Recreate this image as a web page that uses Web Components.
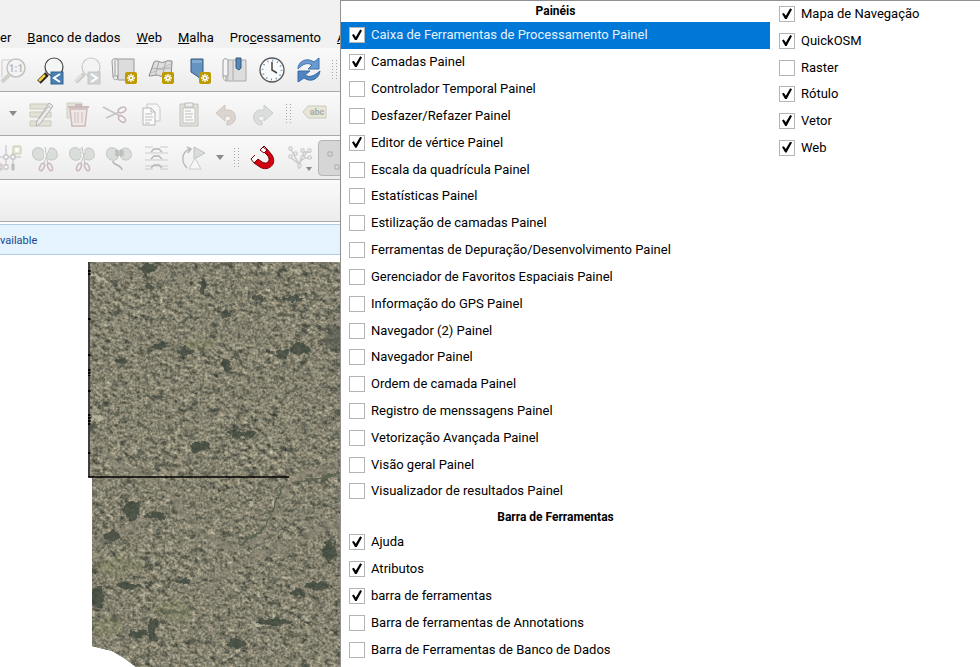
<!DOCTYPE html>
<html lang="pt">
<head>
<meta charset="utf-8">
<title>QGIS</title>
<style>
  body {
    margin: 0;
    font-family: Roboto, "Open Sans", sans-serif;
    font-size: 13px;
    color: #000;
  }
</style>
</head>
<body>
<gis-app></gis-app>

<script>
const badge = '<rect x="15" y="16" width="12" height="12" rx="2" fill="#bd9b05"/><path d="M21 18v8M17 22h8M18.300 19.300l5.400 5.400M23.700 19.300l-5.400 5.400" stroke="#fff" stroke-width="1.400"/><circle cx="21" cy="22" r="2" fill="#fff"/><circle cx="21" cy="22" r="1" fill="#bd9b05"/>';

const leaves = '<path d="M13 13C12 18 3 17 2 12 0 5 5 3 9 4c3 1 5 4 4 9zM16 13c1 4 8 4 10 0 1-5-1-9-6-9-5 1-6 4-4 9z" fill="#d9deda" stroke="#c2c6c2"/>';
const scissors = '<path d="M14 3l1 13M18 4l-5 14" stroke="#f4f4f4" stroke-width="3"/><path d="M14 3l3 17M19 4l-6 15" stroke="#c4c4c4"/><ellipse cx="11" cy="23" rx="2" ry="4" transform="rotate(25 11 23)" fill="none" stroke="#c9b8bb" stroke-width="1.500"/><ellipse cx="19" cy="23" rx="2" ry="4" transform="rotate(-25 19 23)" fill="none" stroke="#c9b8bb" stroke-width="1.500"/>';

// every icon is drawn on a 28 x 28 grid
const icons = {
  'zoom-actual': '<path d="M3 21V4h15" fill="none" stroke="#ccc"/><path d="M10 19l-7 7" stroke="#d2d0c8" stroke-width="4"/><circle cx="17" cy="12" r="9" fill="#f3f3f3" stroke="#c2c2c2" stroke-width="1.500"/><text x="17" y="16" text-anchor="middle" font-size="10" font-weight="bold" fill="#bbb">1:1</text>',
  'zoom-last': '<path d="M11 18l-8 8" stroke="#222" stroke-width="5"/><path d="M9 19l-6 6" stroke="#f3d13a" stroke-width="2.500"/><circle cx="18" cy="11" r="9" fill="#f4f5f5" stroke="#444" stroke-width="1.200"/><rect x="15" y="16" width="12" height="12" fill="#4a7fb5" stroke="#35648f"/><path d="M24 18l-6 4 6 4" fill="none" stroke="#fff" stroke-width="2"/>',
  'zoom-next': '<path d="M11 18l-8 8" stroke="#c9c9c9" stroke-width="4"/><path d="M9 19l-6 6" stroke="#e6e3d6" stroke-width="2"/><circle cx="18" cy="11" r="9" fill="#f3f3f3" stroke="#c8c8c8" stroke-width="1.200"/><rect x="15" y="16" width="12" height="12" fill="#d0d3d5" stroke="#c2c5c8"/><path d="M18 18l6 4-6 4" fill="none" stroke="#fff" stroke-width="2"/>',
  'new-map': '<path d="M6 3h18v21H8z" fill="#dcdcdc" stroke="#999"/><path d="M2 5c0-3 6-3 6 0v15H3z" fill="#f2f2f2" stroke="#999"/><path d="M3 20c0 5 5 5 5 0M5 4v15" fill="none" stroke="#999"/>' + badge,
  'new-3d': '<path d="M7 6c4-3 6 2 10 0s6-1 8-1l-1 16c-5-2-7 1-11-1s-7 0-11 0z" fill="#dedede" stroke="#888"/><path d="M5 13c5-2 8 1 11 0s6-1 9-1M12 5l-4 15M19 5l-4 16" fill="none" stroke="#aaa"/><path d="M4 17l20-9" stroke="#bbb"/>' + badge,
  'new-bookmark': '<path d="M7 3h12v22l-6-5-6-4z" fill="#6593c2" stroke="#345879"/><path d="M8 4h10v3H8z" fill="#82aad1"/>' + badge,
  'bookmarks': '<path d="M5 4h20v21H5z" fill="#ddd" stroke="#aaa"/><path d="M2 5c0-3 5-3 5 0v15H2z" fill="#f5f5f5" stroke="#999"/><path d="M2 20c0 6 5 6 5 1M12 5v19" fill="none" stroke="#aaa"/><path d="M15 2h5v10l-2 2-3-2z" fill="#5787b9" stroke="#34587d"/>',
  'clock': '<circle cx="14" cy="14" r="12" fill="#f8fafb" stroke="#555" stroke-width="1.300"/><circle cx="14" cy="14" r="9.500" fill="none" stroke="#5b86b3" stroke-width="1.800" stroke-dasharray="1 3.970"/><path d="M14 6v8l5 3" fill="none" stroke="#444" stroke-width="1.500"/>',
  'refresh': '<path d="M3 13C3 5 12 1 19 6l5-4v11H13l4-4c-5-3-9-1-14 4z" fill="#6b9bd0" stroke="#3d71aa"/><path d="M25 15c-1 8-9 12-16 7l-6 4V15h12l-5 4c5 3 9 1 15-4z" fill="#4f85c1" stroke="#376ba4"/>',
  'edit-table': '<path d="M3 4h21v5H3zM3 12h21v5H3zM3 21h21v5H3z" fill="#e2e2d6" stroke="#c9c9bb"/><path d="M22 3l4 3-13 18-4 2 1-5z" fill="#ececec" stroke="#b3b3b3"/><path d="M21 6l3 2M12 19l9-12" stroke="#c3b5b5"/>',
  'trash': '<path d="M3 3h15v15H3z" fill="#e2e2d6" stroke="#cfcfc2"/><path d="M6 9h17l-2 17H8z" fill="#f0e8e8" stroke="#cdbaba" stroke-width="1.500"/><path d="M4 7h21M11 5h7" stroke="#cdbaba" stroke-width="2"/><path d="M11 12v11M14 12v11M18 12v11" stroke="#cdbaba"/>',
  'cut': '<path d="M2 7l17 9M5 18l18-8" stroke="#c4c4c4" stroke-width="1.500"/><ellipse cx="21" cy="10" rx="4" ry="2.500" transform="rotate(-25 21 10)" fill="#f4f4f4" stroke="#c9b8bb" stroke-width="1.500"/><ellipse cx="21" cy="19" rx="4" ry="2.500" transform="rotate(40 21 19)" fill="#f4f4f4" stroke="#c9b8bb" stroke-width="1.500"/>',
  'copy': '<path d="M9 4h10l3 4v13H9z" fill="#f7f7f7" stroke="#c8c8c8"/><path d="M5 8h8l4 4v13H5z" fill="#fbfbfb" stroke="#b5b5b5"/><path d="M13 8v4h4M7 14h7M7 17h8M7 20h7M7 23h5" fill="none" stroke="#bbb"/>',
  'paste': '<path d="M5 4h18v22H5z" fill="#e0e0d9" stroke="#c4c4bd"/><path d="M8 8h12v15H8z" fill="#fafafa" stroke="#c3c3c3"/><path d="M10 3h8v4h-8z" fill="#eee" stroke="#bbb"/><path d="M10 11h6M10 14h8M10 17h7M10 20h8" stroke="#bbb"/>',
  'undo': '<path d="M4 13l9-8v5h3c10 0 10 15-1 15v-4c5 0 5-5 1-5h-3v5z" fill="#dbd4cf" stroke="#cdc5c0"/>',
  'redo': '<path d="M24 13l-9-8v5h-3C2 10 2 25 13 25v-4c-5 0-5-5-1-5h3v5z" fill="#dadedc" stroke="#c8cdca"/>',
  'label': '<path d="M2 12l5-6h18v12H7z" fill="#e6e6d9" stroke="#cbcbbc"/><text x="16" y="15" text-anchor="middle" font-size="9" font-weight="bold" fill="#aaa">abc</text>',
  'vertex': '<path d="M0 13h27M12 1v23M19 8v19" stroke="#bdbdbd"/><path d="M10 11h4v4h-4zM17 11h4v4h-4zM10 21h4v4h-4z" fill="#fafafa" stroke="#b8b8b8"/><rect x="19" y="2" width="8" height="8" rx="1" fill="#e7e7d4" stroke="#c9c9b6"/><circle cx="23" cy="6" r="2" fill="#fff"/><path d="M19 20v6" stroke="#bbb" stroke-width="3"/><path d="M2 20h6v6H2z" fill="#eee" stroke="#ccb9b9"/><path d="M4 21l3 4M7 21l-3 4" stroke="#ccb9b9"/>',
  'split': leaves + scissors,
  'split-parts': leaves + scissors + '<path d="M13 4v9M17 5v8" stroke="#ccc" stroke-dasharray="2 2"/>',
  'merge': leaves + '<path d="M10 7h9M10 11h9M10 9h9" stroke="#aaa"/><path d="M12 5v8M16 5v8" stroke="#bbb"/><path d="M8 17c0 5 8 3 9 9" fill="none" stroke="#b5b5b5" stroke-width="1.500"/>',
  'lines': '<path d="M3 3h8M18 3h8M3 9h23M3 16h23M3 22h23M3 25h8M18 25h8" stroke="#ccc"/><path d="M9 8l3-3h5l3 3M9 15l3-3h5l3 3M9 24l3-3h5l3 3" fill="none" stroke="#b5b5b5" stroke-width="1.300"/>',
  'rotate': '<path d="M15 3l11 6-11 6z" fill="#d9dcd9" stroke="#bfc3bf"/><path d="M16 14l6 11H10z" fill="#f7f7f7" stroke="#ccc"/><path d="M8 24C2 18 2 8 11 5M8 3l4 2-3 4" fill="none" stroke="#bbb" stroke-width="1.500"/>',
  'magnet': '<path d="M11 6l4-4 3 3-3 3M6 11l-4 4 3 4 4-4" fill="#fff" stroke="#7d0008"/><path d="M15 8l3-3 5 6c6 10-5 17-12 12l-6-4 4-4 4 3c5 3 9-1 6-6z" fill="#d4000f" stroke="#7d0008"/><path d="M14 3l4 3-3 3-4-3z" fill="#fff" stroke="#7d0008"/>',
  'topology': '<path d="M4 4l9 16 8-12M4 13l9 7 5-12h7M13 20v5M16 14h10" fill="none" stroke="#ccc" stroke-width="1.500"/><path d="M3 3h3v3H3zM3 11h3v3H3zM8 8h3v3H8zM15 5h3v3h-3zM22 5h3v3h-3zM15 12h3v3h-3zM22 12h3v3h-3zM12 20h3v3h-3z" fill="#f5f5f5" stroke="#c5c5c5"/>',
  'grid': '<path d="M5 8h4v4H5zM12 21h4v4h-4z" fill="#dadada" stroke="#aaa"/>'
};

class ToolButton extends HTMLElement {
  constructor() {
    super();
    this.attachShadow({ mode: 'open' });
    this.shadowRoot.innerHTML = `
      <style>
        :host {
          display: block;
          flex: none;
          width: 37px;
        }

        :host([pressed]) {
          box-sizing: border-box;
          height: 36px;
          border: 1px solid #b5b5b5;
          border-radius: 4px;
          background: #d6d6d6;
        }

        button {
          display: grid;
          place-items: center;
          width: 100%;
          height: 100%;
          padding: 0;
          border: 0;
          background: none;
          font: inherit;
        }

        svg {
          width: 28px;
          height: 28px;
          overflow: visible;
        }
      </style>
      <button type="button" aria-label="${this.getAttribute('icon')}">
        <svg viewBox="0 0 28 28" fill="none">${icons[this.getAttribute('icon')]}</svg>
      </button>
    `;
  }
}

class ToolArrow extends HTMLElement {
  constructor() {
    super();
    this.attachShadow({ mode: 'open' });
    this.shadowRoot.innerHTML = `
      <style>
        :host {
          flex: none;
          width: 18px;
        }

        :host([low]) {
          width: 0;
          align-self: end;
        }

        button {
          display: block;
          width: 8px;
          height: 5px;
          margin: 0 auto;
          padding: 0;
          border: 0;
          background: #8a8a8a;
          clip-path: polygon(0 0, 100% 0, 50% 100%);
        }

        :host([low]) button {
          margin: 0 0 8px -12px;
          width: 6px;
          height: 4px;
        }
      </style>
      <button type="button" aria-label="menu"></button>
    `;
  }
}

class ToolHandle extends HTMLElement {
  constructor() {
    super();
    this.attachShadow({ mode: 'open' });
    this.shadowRoot.innerHTML = `
      <style>
        :host {
          flex: none;
          width: 5px;
          height: 19px;
          margin: 0 5px;
          background: repeating-linear-gradient(#a4a4a4 0 1px, #f4f4f4 1px 3px);
          -webkit-mask: repeating-linear-gradient(90deg, #000 0 1px, transparent 1px 4px);
          mask: repeating-linear-gradient(90deg, #000 0 1px, transparent 1px 4px);
        }
      </style>
    `;
  }
}

class ToolStrip extends HTMLElement {
  constructor() {
    super();
    this.attachShadow({ mode: 'open' });
    this.shadowRoot.innerHTML = `
      <style>
        :host {
          display: block;
          box-sizing: border-box;
          height: 44px;
          border-bottom: 1px solid #a9a9a9;
          background: linear-gradient(#fafafa, #ececec);
          overflow: hidden;
        }

        :host([empty]) {
          height: 42px;
        }

        div {
          display: flex;
          align-items: center;
          height: 100%;
        }

        /* strips that are scrolled a little to the left */
        :host([cut]) div {
          margin-left: -6px;
        }

        :host([cut="more"]) div {
          margin-left: -11px;
        }
      </style>
      <div><slot></slot></div>
    `;
  }
}

class MenuBar extends HTMLElement {
  constructor() {
    super();
    this.attachShadow({ mode: 'open' });
    this.shadowRoot.innerHTML = `
      <style>
        :host {
          display: flex;
          align-items: end;
          gap: 16px;
          box-sizing: border-box;
          height: 48px;
          background: #f1f1f1;
          white-space: nowrap;
        }

        button {
          flex: none;
          padding: 0;
          border: 0;
          background: none;
          color: inherit;
          font: inherit;
          line-height: 20px;
        }
      </style>
      <button type="button">er</button>
      <button type="button"><u>B</u>anco de dados</button>
      <button type="button"><u>W</u>eb</button>
      <button type="button"><u>M</u>alha</button>
      <button type="button">Pro<u>c</u>essamento</button>
      <button type="button"><u>A</u></button>
    `;
  }
}

class MessageBar extends HTMLElement {
  constructor() {
    super();
    this.attachShadow({ mode: 'open' });
    this.shadowRoot.innerHTML = `
      <style>
        :host {
          display: flex;
          align-items: center;
          box-sizing: border-box;
          height: 31px;
          margin: 2px 0 7px;
          padding-top: 2px;
          border: solid #b3cbe2;
          border-width: 1px 0;
          background: #e5f3fe;
          color: #17478f;
          font-size: 11px;
        }
      </style>
      <slot></slot>
    `;
  }
}

class MapCanvas extends HTMLElement {
  constructor() {
    super();
    this.attachShadow({ mode: 'open' });
    this.shadowRoot.innerHTML = `
      <style>
        :host {
          display: block;
          padding-left: 88px;
        }

        svg {
          display: block;
        }
      </style>
      <svg width="252" height="405" viewBox="0 0 252 405">
        <defs>
          <filter id="grain" x="0" y="0" width="1" height="1" color-interpolation-filters="sRGB">
            <feTurbulence type="fractalNoise" baseFrequency="0.13 0.24" numOctaves="5" seed="7"/>
            <feColorMatrix values="0.9 0.5 0 0 -0.18  0.9 0.5 0 0 -0.18  0.9 0.5 0 0 -0.18  0 0 0 0 1"/>
            <feComponentTransfer>
              <feFuncR type="table" tableValues="0.16 0.28 0.52 0.7 0.88"/>
              <feFuncG type="table" tableValues="0.18 0.29 0.51 0.67 0.86"/>
              <feFuncB type="table" tableValues="0.17 0.26 0.44 0.58 0.79"/>
            </feComponentTransfer>
          </filter>
          <filter id="fine" x="0" y="0" width="1" height="1" color-interpolation-filters="sRGB">
            <feTurbulence type="fractalNoise" baseFrequency="0.4" numOctaves="2" seed="11"/>
            <feColorMatrix values="1.6 0 0 0 -0.28  1.5 0.1 0 0 -0.29  1.4 0 0.1 0 -0.32  0 0 0 0 1"/>
          </filter>
          <filter id="patch" x="0" y="0" width="1" height="1" color-interpolation-filters="sRGB">
            <feTurbulence type="fractalNoise" baseFrequency="0.02 0.035" numOctaves="3" seed="5"/>
            <feColorMatrix values="0 0 0 0 0.53  0 0 0 0 0.51  0 0 0 0 0.45  5 0 0 0 -2.2"/>
          </filter>
          <filter id="tint" x="0" y="0" width="1" height="1" color-interpolation-filters="sRGB">
            <feTurbulence type="fractalNoise" baseFrequency="0.09 0.13" numOctaves="4" seed="21"/>
            <feColorMatrix values="0 0 0 0 0.2  0 0 0 0 0.23  0 0 0 0 0.2  5 0 0 0 -3"/>
          </filter>
          <filter id="rough" x="-0.2" y="-0.2" width="1.4" height="1.4">
            <feTurbulence type="fractalNoise" baseFrequency="0.15" numOctaves="2" seed="3"/>
            <feDisplacementMap in="SourceGraphic" scale="9" xChannelSelector="R" yChannelSelector="G"/>
            <feGaussianBlur stdDeviation="0.6"/>
          </filter>
          <clipPath id="edge">
            <path d="M2 0H252V405H48L36 396 24 389 4 384V216H2z"/>
          </clipPath>
        </defs>
        <g clip-path="url(#edge)">
          <rect width="252" height="405" fill="#7a7966"/>
          <rect x="-220" y="-120" width="720" height="720" transform="rotate(28 126 200)" filter="url(#grain)"/>
          <rect width="252" height="405" filter="url(#patch)" opacity="0.4"/>
          <rect width="252" height="405" filter="url(#fine)" opacity="0.3"/>
          <rect width="252" height="405" filter="url(#tint)" opacity="0.6"/>
          <g filter="url(#rough)">
            <g fill="none" stroke="#8a8375" stroke-width="7" opacity="0.5">
              <path d="M77 222L92 246 110 268 128 280 148 287 170 276 184 250 198 226 220 210 252 204"/>
              <path d="M4 285L42 264 80 250M116 330L146 304 190 286 252 262"/>
              <path d="M14 190L36 206 76 222"/>
            </g>
            <path d="M196 222L184 250 172 270 150 283M202 222L230 217 252 209" fill="none" stroke="#58604f" stroke-width="2"/>
            <g fill="#3b433b" opacity="0.75">
              <ellipse cx="60" cy="7" rx="9" ry="5"/><ellipse cx="115" cy="24" rx="3" ry="7"/>
              <ellipse cx="61" cy="24" rx="5" ry="3"/><ellipse cx="72" cy="84" rx="8" ry="4"/>
              <ellipse cx="98" cy="90" rx="10" ry="3"/><ellipse cx="34" cy="98" rx="6" ry="4"/>
              <ellipse cx="194" cy="91" rx="6" ry="5"/><ellipse cx="213" cy="87" rx="9" ry="6"/>
              <ellipse cx="139" cy="53" rx="7" ry="4"/><ellipse cx="170" cy="36" rx="5" ry="4"/>
              <ellipse cx="205" cy="36" rx="12" ry="3"/><ellipse cx="139" cy="102" rx="5" ry="6"/>
              <ellipse cx="112" cy="185" rx="10" ry="5"/><ellipse cx="155" cy="172" rx="15" ry="3"/>
              <ellipse cx="44" cy="249" rx="8" ry="10"/><ellipse cx="68" cy="254" rx="11" ry="4"/>
              <ellipse cx="242" cy="288" rx="6" ry="12"/><ellipse cx="229" cy="324" rx="10" ry="5"/>
              <ellipse cx="210" cy="331" rx="7" ry="4"/><ellipse cx="148" cy="382" rx="10" ry="4"/>
              <ellipse cx="185" cy="360" rx="17" ry="4"/><ellipse cx="65" cy="368" rx="4" ry="12"/>
              <ellipse cx="50" cy="372" rx="9" ry="5"/><ellipse cx="24" cy="274" rx="8" ry="5"/>
              <ellipse cx="10" cy="335" rx="7" ry="12"/><ellipse cx="95" cy="320" rx="8" ry="4"/>
              <ellipse cx="42" cy="324" rx="13" ry="3"/><ellipse cx="246" cy="77" rx="10" ry="14" opacity="0.6"/>
            </g>
            <g fill="#858b5b" opacity="0.25">
              <ellipse cx="30" cy="305" rx="24" ry="9"/><ellipse cx="85" cy="348" rx="20" ry="10"/>
              <ellipse cx="18" cy="364" rx="16" ry="9"/><ellipse cx="110" cy="82" rx="17" ry="6"/>
            </g>
            <g fill="#cbc5ac" opacity="0.7">
              <ellipse cx="12" cy="16" rx="10" ry="2" transform="rotate(30 12 16)"/>
              <ellipse cx="10" cy="156" rx="6" ry="3"/><ellipse cx="163" cy="242" rx="2" ry="4"/>
              <ellipse cx="184" cy="241" rx="2" ry="4"/><ellipse cx="170" cy="362" rx="6" ry="2"/>
            </g>
          </g>
        </g>
        <path d="M1 0V215M0 215H201" fill="none" stroke="#000" stroke-width="1.500"/>
        <path d="M1 8v6M1 56v2M1 92v2M1 107v7M1 128v2M1 152v11M1 190v2" stroke="#000" stroke-width="3" stroke-dasharray="2 1"/>
      </svg>
    `;
  }
}

class MenuCheck extends HTMLElement {
  constructor() {
    super();
    this.attachShadow({ mode: 'open' });
    this.shadowRoot.innerHTML = `
      <style>
        :host {
          display: flex;
          flex: 1 1 0;
          min-height: 20px;
        }

        :host([active]) {
          background: #0078d7;
          color: #e5f1fb;
        }

        label {
          display: flex;
          flex: 1;
          align-items: center;
          gap: 6px;
          padding-left: 8px;
          line-height: 20px;
          white-space: nowrap;
        }

        input {
          appearance: none;
          box-sizing: border-box;
          flex: none;
          width: 16px;
          height: 16px;
          margin: 0;
          border: 1px solid #b4b4b4;
          background: #fff;
        }

        input:checked::before {
          content: "";
          display: block;
          width: 10px;
          height: 11px;
          margin: 1px 2px;
          background: #000;
          clip-path: polygon(0 50%, 18% 42%, 38% 68%, 82% 0, 100% 10%, 46% 100%, 32% 100%);
        }
      </style>
      <label>
        <input type="checkbox">
        <span><slot></slot></span>
      </label>
    `;
  }

  connectedCallback() {
    this.shadowRoot.querySelector('input').checked = this.hasAttribute('checked');
  }
}

class PanelMenu extends HTMLElement {
  constructor() {
    super();
    this.attachShadow({ mode: 'open' });
    this.shadowRoot.innerHTML = `
      <style>
        :host {
          display: grid;
          grid-template-columns: 429px 1fr;
          box-sizing: border-box;
          border: solid #919191;
          border-width: 1px 0 0 1px;
          background: #fff;
        }

        /* both columns share the window's height between their rows */
        div {
          display: flex;
          flex-direction: column;
          min-height: 0;
        }

        .long {
          padding-bottom: 4px;
        }

        .short {
          padding-left: 1px;
        }

        .short::after {
          content: "";
          flex: 19 1 0;
        }

        h2 {
          flex: none;
          margin: 0;
          font-size: 12px;
          line-height: 20px;
          text-align: center;
        }

        h2:first-child {
          padding-bottom: 1px;
        }

        h2:not(:first-child) {
          line-height: 24px;
        }
      </style>
      <div class="long">
        <h2>Painéis</h2>
        <menu-check checked active>Caixa de Ferramentas de Processamento Painel</menu-check>
        <menu-check checked>Camadas Painel</menu-check>
        <menu-check>Controlador Temporal Painel</menu-check>
        <menu-check>Desfazer/Refazer Painel</menu-check>
        <menu-check checked>Editor de vértice Painel</menu-check>
        <menu-check>Escala da quadrícula Painel</menu-check>
        <menu-check>Estatísticas Painel</menu-check>
        <menu-check>Estilização de camadas Painel</menu-check>
        <menu-check>Ferramentas de Depuração/Desenvolvimento Painel</menu-check>
        <menu-check>Gerenciador de Favoritos Espaciais Painel</menu-check>
        <menu-check>Informação do GPS Painel</menu-check>
        <menu-check>Navegador (2) Painel</menu-check>
        <menu-check>Navegador Painel</menu-check>
        <menu-check>Ordem de camada Painel</menu-check>
        <menu-check>Registro de menssagens Painel</menu-check>
        <menu-check>Vetorização Avançada Painel</menu-check>
        <menu-check>Visão geral Painel</menu-check>
        <menu-check>Visualizador de resultados Painel</menu-check>
        <h2>Barra de Ferramentas</h2>
        <menu-check checked>Ajuda</menu-check>
        <menu-check checked>Atributos</menu-check>
        <menu-check checked>barra de ferramentas</menu-check>
        <menu-check>Barra de ferramentas de Annotations</menu-check>
        <menu-check>Barra de Ferramentas de Banco de Dados</menu-check>
      </div>
      <div class="short">
        <menu-check checked>Mapa de Navegação</menu-check>
        <menu-check checked>QuickOSM</menu-check>
        <menu-check>Raster</menu-check>
        <menu-check checked>Rótulo</menu-check>
        <menu-check checked>Vetor</menu-check>
        <menu-check checked>Web</menu-check>
      </div>
    `;
  }
}

class GisApp extends HTMLElement {
  constructor() {
    super();
    this.attachShadow({ mode: 'open' });
    this.shadowRoot.innerHTML = `
      <style>
        :host {
          display: block;
          position: relative;
          height: 100vh;
          overflow: hidden;
          background: #fff;
        }

        /* popup over the window */
        panel-menu {
          position: absolute;
          inset: 0 0 0 340px;
        }
      </style>
      <menu-bar></menu-bar>
      <tool-strip cut>
        <tool-button icon="zoom-actual"></tool-button>
        <tool-button icon="zoom-last"></tool-button>
        <tool-button icon="zoom-next"></tool-button>
        <tool-button icon="new-map"></tool-button>
        <tool-button icon="new-3d"></tool-button>
        <tool-button icon="new-bookmark"></tool-button>
        <tool-button icon="bookmarks"></tool-button>
        <tool-button icon="clock"></tool-button>
        <tool-button icon="refresh"></tool-button>
        <tool-handle></tool-handle>
      </tool-strip>
      <tool-strip cut="more">
        <tool-handle></tool-handle>
        <tool-arrow></tool-arrow>
        <tool-button icon="edit-table"></tool-button>
        <tool-button icon="trash"></tool-button>
        <tool-button icon="cut"></tool-button>
        <tool-button icon="copy"></tool-button>
        <tool-button icon="paste"></tool-button>
        <tool-button icon="undo"></tool-button>
        <tool-button icon="redo"></tool-button>
        <tool-handle></tool-handle>
        <tool-button icon="label"></tool-button>
      </tool-strip>
      <tool-strip cut="more">
        <tool-button icon="vertex"></tool-button>
        <tool-button icon="split"></tool-button>
        <tool-button icon="split-parts"></tool-button>
        <tool-button icon="merge"></tool-button>
        <tool-button icon="lines"></tool-button>
        <tool-button icon="rotate"></tool-button>
        <tool-arrow></tool-arrow>
        <tool-handle></tool-handle>
        <tool-button icon="magnet"></tool-button>
        <tool-button icon="topology"></tool-button>
        <tool-arrow low></tool-arrow>
        <tool-button icon="grid" pressed></tool-button>
      </tool-strip>
      <tool-strip empty></tool-strip>
      <message-bar>vailable</message-bar>
      <map-canvas></map-canvas>
      <panel-menu></panel-menu>
    `;
  }
}

customElements.define('tool-button', ToolButton);
customElements.define('tool-arrow', ToolArrow);
customElements.define('tool-handle', ToolHandle);
customElements.define('tool-strip', ToolStrip);
customElements.define('menu-bar', MenuBar);
customElements.define('message-bar', MessageBar);
customElements.define('map-canvas', MapCanvas);
customElements.define('menu-check', MenuCheck);
customElements.define('panel-menu', PanelMenu);
customElements.define('gis-app', GisApp);
</script>
</body>
</html>
